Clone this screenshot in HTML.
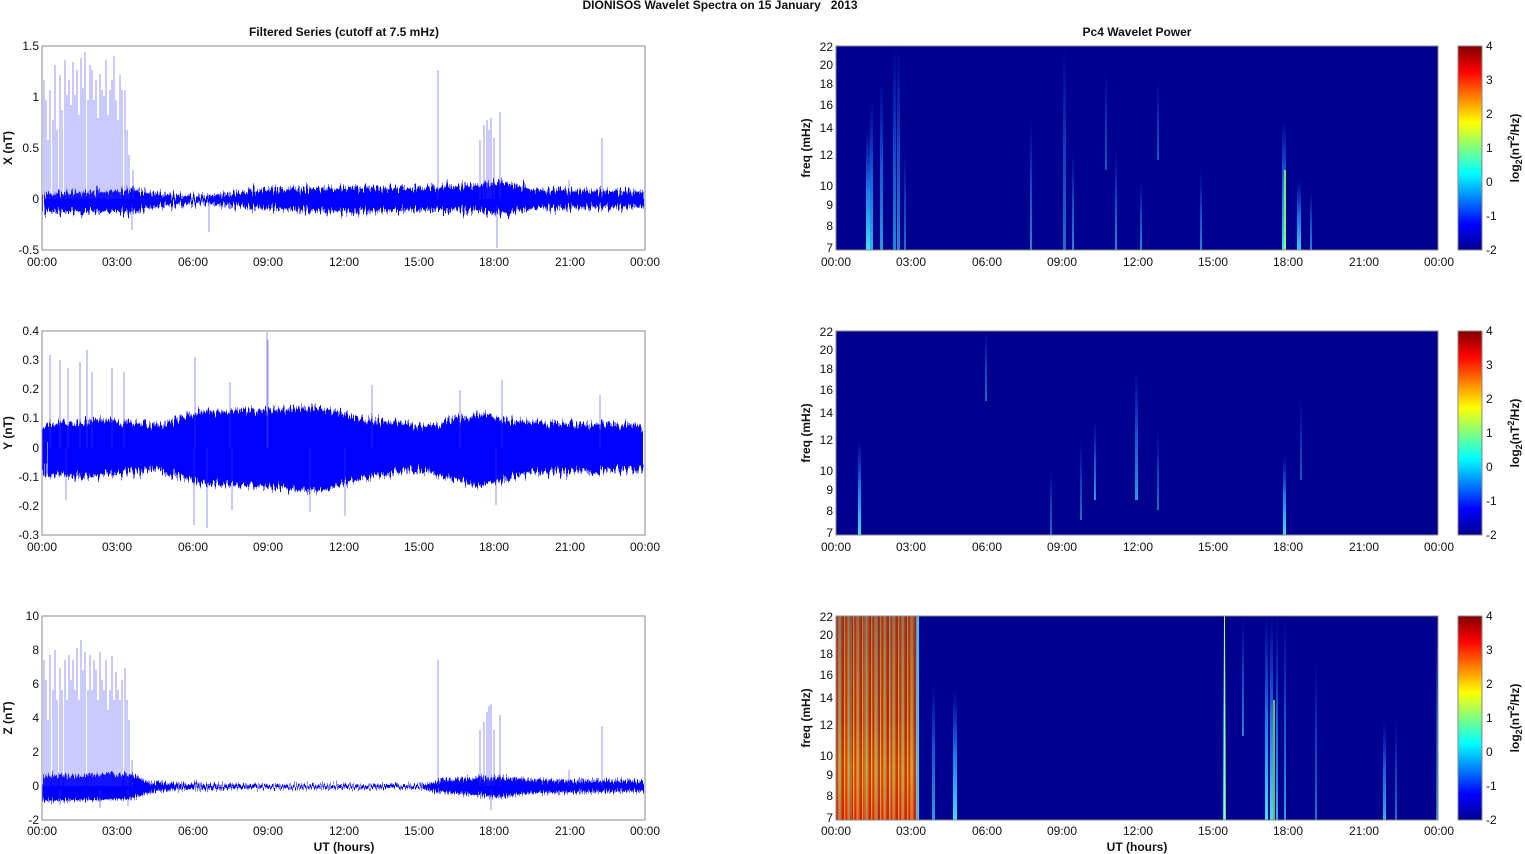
<!DOCTYPE html>
<html><head><meta charset="utf-8"><style>
html,body{margin:0;padding:0;background:#fff;}
svg{display:block;font-family:"Liberation Sans",sans-serif;}
.t{font-size:12px;fill:#111;}
.b{font-size:12px;font-weight:bold;fill:#111;}
</style></head><body>
<svg width="1525" height="854" viewBox="0 0 1525 854" xmlns="http://www.w3.org/2000/svg">
<defs>
<filter id="jag" x="0" y="-0.5" width="1" height="2">
<feTurbulence type="fractalNoise" baseFrequency="0.6 0.01" numOctaves="2" seed="3" result="n"/>
<feDisplacementMap in="SourceGraphic" in2="n" scale="22" xChannelSelector="B" yChannelSelector="R"/>
</filter>
<filter id="jag2" x="0" y="-0.5" width="1" height="2">
<feTurbulence type="fractalNoise" baseFrequency="0.9 0.01" numOctaves="2" seed="7" result="n"/>
<feDisplacementMap in="SourceGraphic" in2="n" scale="14" xChannelSelector="B" yChannelSelector="R"/>
</filter>
<linearGradient id="jet" x1="0" y1="1" x2="0" y2="0">
<stop offset="0" stop-color="#00008f"/><stop offset="0.125" stop-color="#0000ff"/>
<stop offset="0.375" stop-color="#00ffff"/><stop offset="0.625" stop-color="#ffff00"/>
<stop offset="0.875" stop-color="#ff0000"/><stop offset="1" stop-color="#800000"/>
</linearGradient>
<linearGradient id="stripe" x1="0" y1="0" x2="9" y2="0" gradientUnits="userSpaceOnUse" spreadMethod="repeat">
<stop offset="0" stop-color="#c00000"/><stop offset="0.2" stop-color="#ff8000"/>
<stop offset="0.35" stop-color="#60d0a0"/><stop offset="0.5" stop-color="#ff3000"/>
<stop offset="0.7" stop-color="#a00000"/><stop offset="0.85" stop-color="#e0e040"/><stop offset="1" stop-color="#c00000"/>
</linearGradient>
<linearGradient id="stripe2" x1="0" y1="0" x2="13" y2="0" gradientUnits="userSpaceOnUse" spreadMethod="repeat">
<stop offset="0" stop-color="#40c0ff" stop-opacity="0"/><stop offset="0.45" stop-color="#40c0ff" stop-opacity="0"/>
<stop offset="0.5" stop-color="#50d0c0" stop-opacity="0.8"/><stop offset="0.55" stop-color="#40c0ff" stop-opacity="0"/>
<stop offset="1" stop-color="#40c0ff" stop-opacity="0"/>
</linearGradient>
<linearGradient id="stripeV" x1="0" y1="0" x2="0" y2="1">
<stop offset="0" stop-color="#804040" stop-opacity="0.5"/><stop offset="0.5" stop-color="#a05030" stop-opacity="0.2"/>
<stop offset="0.75" stop-color="#ffb000" stop-opacity="0.2"/><stop offset="1" stop-color="#ff2000" stop-opacity="0.3"/>
</linearGradient>
<linearGradient id="cy" x1="0" y1="0" x2="0" y2="1">
<stop offset="0" stop-color="#2060ff" stop-opacity="0"/><stop offset="0.5" stop-color="#2090ff" stop-opacity="0.85"/><stop offset="1" stop-color="#40e0ff"/>
</linearGradient>
</defs>

<text x="720" y="9" class="b" text-anchor="middle" font-size="11" xml:space="preserve">DIONISOS Wavelet Spectra on 15 January   2013</text>
<text x="344" y="36" class="b" text-anchor="middle">Filtered Series (cutoff at 7.5 mHz)</text>
<text x="1137" y="36" class="b" text-anchor="middle">Pc4 Wavelet Power</text>

<!-- ===== LEFT PANEL 1 ===== -->
<g>
<g filter="url(#jag)">
<path d="M42,194 L130,190 L160,194 L200,197 L260,190 L340,188 L420,188 L470,186 L500,182 L540,190 L645,192 L645,207 L540,208 L500,214 L470,210 L420,210 L340,212 L260,208 L200,203 L160,206 L130,212 L42,212 Z" fill="#0000ff"/>
</g>
<g stroke="#4040ff" stroke-width="1" opacity="0.55">
<path d="M44,199V80 M46,199V100 M48,199V140 M50,199V90 M53,199V120 M55,199V65 M57,199V130 M60,199V75 M62,199V110 M65,199V60 M67,199V95 M69,199V80 M71,199V105 M73,199V62 M75,199V95 M77,199V70 M79,199V115 M81,199V58 M83,199V88 M85,199V52 M88,199V100 M90,199V65 M92,199V70 M94,199V100 M96,199V80 M98,199V118 M100,199V74 M102,199V90 M104,199V96 M106,199V60 M108,199V115 M110,199V90 M112,199V80 M114,199V56 M116,199V100 M118,199V120 M120,199V75 M122,199V90 M125,199V90 M127,199V130 M129,199V155 M133,199V170 M438,199V70 M480,199V140 M484,199V125 M487,199V120 M489,199V130 M491,199V118 M494,199V138 M500,199V112 M569,199V180 M602,199V138 M209,205V232 M497,205V248 M132,205V230"/>
</g>
<rect x="42" y="46" width="603" height="204" fill="none" stroke="#888" stroke-width="1"/>
</g>

<!-- ===== LEFT PANEL 2 ===== -->
<g>
<g filter="url(#jag)">
<path d="M42,425 L100,420 L160,425 L200,412 L260,410 L320,408 L360,418 L420,426 L480,414 L520,422 L645,426 L645,470 L520,474 L480,486 L420,470 L360,478 L320,492 L260,486 L200,484 L160,470 L100,476 L42,474 Z" fill="#0000ff"/>
</g>
<g stroke="#4040ff" stroke-width="1" opacity="0.55">
<path d="M50,448V355 M60,448V360 M68,448V368 M80,448V362 M87,448V350 M92,448V372 M112,448V368 M124,448V372 M195,448V357 M230,448V382 M267,448V332 M268,448V340 M372,448V385 M460,448V390 M502,448V380 M600,448V395 M194,448V525 M207,448V528 M232,448V510 M310,448V512 M345,448V516 M496,448V505 M66,448V500"/>
</g>
<rect x="42" y="331" width="603" height="204" fill="none" stroke="#888" stroke-width="1"/>
</g>

<!-- ===== LEFT PANEL 3 ===== -->
<g>
<g filter="url(#jag2)">
<path d="M42,776 L130,774 L150,782 L180,784 L260,785 L420,785 L440,780 L500,777 L530,780 L645,781 L645,791 L530,793 L500,797 L440,792 L420,788 L260,788 L180,789 L150,792 L130,799 L42,801 Z" fill="#0000ff"/>
</g>
<g stroke="#4040ff" stroke-width="1" opacity="0.55">
<path d="M44,786V660 M46,786V680 M48,786V720 M50,786V655 M53,786V690 M55,786V650 M57,786V700 M60,786V668 M62,786V690 M65,786V660 M67,786V700 M69,786V655 M71,786V680 M73,786V660 M75,786V690 M77,786V648 M79,786V700 M81,786V640 M83,786V670 M85,786V652 M88,786V690 M90,786V655 M92,786V690 M94,786V660 M96,786V670 M98,786V700 M100,786V652 M102,786V680 M104,786V690 M106,786V660 M108,786V710 M110,786V690 M112,786V656 M114,786V700 M116,786V672 M118,786V690 M120,786V700 M122,786V680 M125,786V668 M127,786V700 M129,786V720 M132,786V760 M438,786V660 M480,786V730 M484,786V722 M487,786V712 M489,786V706 M491,786V704 M494,786V730 M500,786V715 M569,786V770 M602,786V726 M60,790V805 M100,790V808 M128,790V806 M491,790V810"/>
</g>
<rect x="42" y="616" width="603" height="204" fill="none" stroke="#888" stroke-width="1"/>
</g>

<!-- Left tick labels -->
<g class="t" text-anchor="end">
<text x="39" y="50">1.5</text><text x="39" y="101">1</text><text x="39" y="152">0.5</text><text x="39" y="203">0</text><text x="39" y="254">-0.5</text>
<text x="39" y="335">0.4</text><text x="39" y="364">0.3</text><text x="39" y="393">0.2</text><text x="39" y="422">0.1</text><text x="39" y="452">0</text><text x="39" y="481">-0.1</text><text x="39" y="510">-0.2</text><text x="39" y="539">-0.3</text>
<text x="39" y="620">10</text><text x="39" y="654">8</text><text x="39" y="688">6</text><text x="39" y="722">4</text><text x="39" y="756">2</text><text x="39" y="790">0</text><text x="39" y="824">-2</text>
</g>
<g class="b" text-anchor="middle">
<text transform="translate(12,148) rotate(-90)">X (nT)</text>
<text transform="translate(12,433) rotate(-90)">Y (nT)</text>
<text transform="translate(12,718) rotate(-90)">Z (nT)</text>
<text transform="translate(810,148) rotate(-90)">freq (mHz)</text>
<text transform="translate(810,433) rotate(-90)">freq (mHz)</text>
<text transform="translate(810,718) rotate(-90)">freq (mHz)</text>
<text x="344" y="851">UT (hours)</text>
<text x="1137" y="851">UT (hours)</text>
</g>

<!-- x tick labels -->
<g class="t" text-anchor="middle">
<g id="xl1">
<text x="42" y="266">00:00</text><text x="117" y="266">03:00</text><text x="193" y="266">06:00</text><text x="268" y="266">09:00</text><text x="344" y="266">12:00</text><text x="419" y="266">15:00</text><text x="494" y="266">18:00</text><text x="570" y="266">21:00</text><text x="645" y="266">00:00</text>
</g>
<use href="#xl1" y="285"/><use href="#xl1" y="569"/>
<use href="#xl1" x="794"/><use href="#xl1" x="794" y="285"/><use href="#xl1" x="794" y="569"/>
</g>

<!-- ===== RIGHT PANELS ===== -->
<g>
<rect x="836" y="46" width="602" height="204" fill="#00008f"/>
<rect x="866" y="130" width="4" height="120" fill="url(#cy)"/>
<rect x="870" y="100" width="3" height="150" fill="url(#cy)" opacity="0.8"/>
<rect x="880" y="80" width="3" height="170" fill="url(#cy)" opacity="0.7"/>
<rect x="893" y="46" width="3" height="204" fill="url(#cy)" opacity="0.6"/>
<rect x="897" y="46" width="3" height="204" fill="url(#cy)" opacity="0.6"/>
<rect x="904" y="150" width="2" height="100" fill="url(#cy)" opacity="0.5"/>
<rect x="1030" y="120" width="2" height="130" fill="url(#cy)" opacity="0.6"/>
<rect x="1063" y="46" width="3" height="204" fill="url(#cy)" opacity="0.5"/>
<rect x="1072" y="150" width="2" height="100" fill="url(#cy)" opacity="0.6"/>
<rect x="1105" y="70" width="2" height="100" fill="url(#cy)" opacity="0.4"/>
<rect x="1115" y="150" width="2" height="100" fill="url(#cy)" opacity="0.6"/>
<rect x="1140" y="180" width="2" height="70" fill="url(#cy)" opacity="0.6"/>
<rect x="1157" y="80" width="2" height="80" fill="url(#cy)" opacity="0.4"/>
<rect x="1200" y="170" width="2" height="80" fill="url(#cy)" opacity="0.6"/>
<rect x="1282" y="120" width="4" height="130" fill="url(#cy)"/>
<rect x="1284" y="170" width="2" height="80" fill="#a0ff40" opacity="0.8"/>
<rect x="1297" y="180" width="4" height="70" fill="url(#cy)" opacity="0.9"/>
<rect x="1310" y="190" width="2" height="60" fill="url(#cy)" opacity="0.6"/>
</g>
<g>
<rect x="836" y="331" width="602" height="204" fill="#00008f"/>
<rect x="858" y="440" width="3" height="95" fill="url(#cy)"/>
<rect x="985" y="331" width="2" height="70" fill="url(#cy)" opacity="0.5"/>
<rect x="1050" y="470" width="2" height="65" fill="url(#cy)" opacity="0.5"/>
<rect x="1080" y="440" width="2" height="80" fill="url(#cy)" opacity="0.5"/>
<rect x="1094" y="420" width="2" height="80" fill="url(#cy)" opacity="0.7"/>
<rect x="1135" y="370" width="3" height="130" fill="url(#cy)" opacity="0.7"/>
<rect x="1157" y="430" width="2" height="80" fill="url(#cy)" opacity="0.5"/>
<rect x="1283" y="455" width="3" height="80" fill="url(#cy)"/>
<rect x="1300" y="400" width="2" height="80" fill="url(#cy)" opacity="0.4"/>
</g>
<g>
<rect x="836" y="616" width="602" height="204" fill="#00008f"/>
<rect x="836" y="616" width="82" height="204" fill="url(#stripe)"/>
<rect x="836" y="616" width="82" height="204" fill="url(#stripe2)"/>
<rect x="836" y="616" width="82" height="204" fill="url(#stripeV)"/>
<rect x="917" y="616" width="2" height="204" fill="#40c0ff"/>
<rect x="932" y="680" width="3" height="140" fill="url(#cy)" opacity="0.7"/>
<rect x="953" y="690" width="4" height="130" fill="url(#cy)"/>
<rect x="1223" y="616" width="3" height="204" fill="url(#cy)"/>
<rect x="1224" y="616" width="1" height="204" fill="#c0ff40"/>
<rect x="1242" y="616" width="2" height="120" fill="url(#cy)" opacity="0.6"/>
<rect x="1265" y="616" width="3" height="204" fill="url(#cy)"/>
<rect x="1270" y="616" width="3" height="204" fill="url(#cy)"/>
<rect x="1273" y="700" width="2" height="120" fill="#a0ff60" opacity="0.7"/>
<rect x="1276" y="616" width="2" height="204" fill="url(#cy)" opacity="0.8"/>
<rect x="1284" y="616" width="2" height="204" fill="url(#cy)" opacity="0.7"/>
<rect x="1315" y="660" width="2" height="160" fill="url(#cy)" opacity="0.5"/>
<rect x="1383" y="720" width="3" height="100" fill="url(#cy)" opacity="0.8"/>
<rect x="1395" y="720" width="2" height="100" fill="url(#cy)" opacity="0.5"/>
<rect x="1436" y="616" width="2" height="204" fill="url(#cy)" opacity="0.6"/>
</g>
<g fill="none" stroke="#888">
<rect x="836" y="46" width="602" height="204"/><rect x="836" y="331" width="602" height="204"/><rect x="836" y="616" width="602" height="204"/>
</g>

<!-- freq labels -->
<g class="t" text-anchor="end" id="fl">
<text x="833" y="51">22</text><text x="833" y="69">20</text><text x="833" y="88">18</text><text x="833" y="109">16</text><text x="833" y="132">14</text><text x="833" y="159">12</text><text x="833" y="190">10</text><text x="833" y="209">9</text><text x="833" y="230">8</text><text x="833" y="252">7</text>
</g>
<use href="#fl" y="285"/><use href="#fl" y="570"/>

<!-- colorbars -->
<g id="cb">
<rect x="1458" y="46" width="24" height="204" fill="url(#jet)" stroke="#888"/>
<g class="t">
<text x="1486" y="50">4</text><text x="1486" y="84">3</text><text x="1486" y="118">2</text><text x="1486" y="152">1</text><text x="1486" y="186">0</text><text x="1486" y="220">-1</text><text x="1486" y="254">-2</text>
</g>
<text class="b" transform="translate(1519,148) rotate(-90)" text-anchor="middle">log<tspan font-size="9" dy="3">2</tspan><tspan dy="-3">(nT</tspan><tspan font-size="9" dy="-5">2</tspan><tspan dy="5">/Hz)</tspan></text>
</g>
<use href="#cb" y="285"/><use href="#cb" y="570"/>
</svg>
</body></html>
